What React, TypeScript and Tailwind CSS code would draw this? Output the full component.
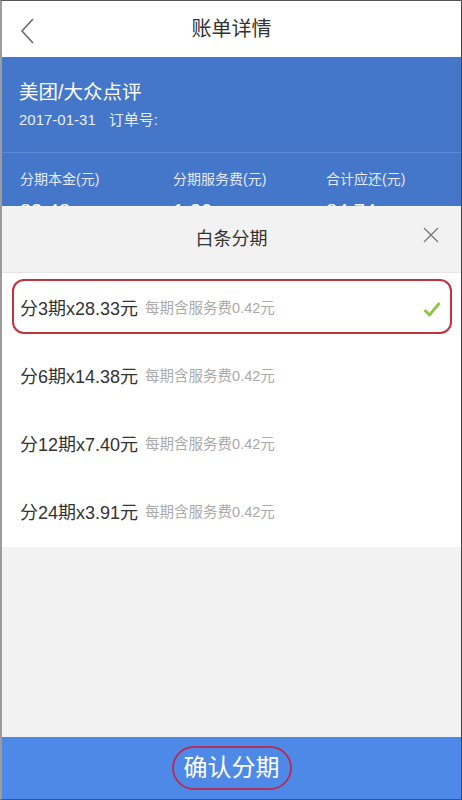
import { X } from 'lucide-react';

const FONT = { fontFamily: '"Liberation Sans", "Noto Sans CJK SC", sans-serif' };

const plans = [
  { label: '分3期x28.33元', fee: '每期含服务费0.42元', selected: true },
  { label: '分6期x14.38元', fee: '每期含服务费0.42元', selected: false },
  { label: '分12期x7.40元', fee: '每期含服务费0.42元', selected: false },
  { label: '分24期x3.91元', fee: '每期含服务费0.42元', selected: false },
];

const totals = [
  ['分期本金(元)', '83.48'],
  ['分期服务费(元)', '1.26'],
  ['合计应还(元)', '84.74'],
];

export default function App() {
  return (
    <div
      style={FONT}
      className="flex h-[800px] w-[462px] flex-col overflow-hidden border-y border-r border-l-2 border-y-[#555] border-r-[#444] border-l-[#9c9c9c] bg-[#f2f2f2]"
    >
      {/* nav bar */}
      <header className="relative flex h-[56px] shrink-0 items-center justify-center bg-white">
        <svg className="absolute left-[16px] top-[16px]" width="20" height="28" viewBox="0 0 20 28">
          <path d="M15 2 L4 14 L15 26" fill="none" stroke="#6b6b6b" strokeWidth="1.6" />
        </svg>
        <h1 className="text-[20px] text-[#333]">账单详情</h1>
      </header>

      {/* bill summary, mostly covered by the sheet */}
      <section className="h-[149px] shrink-0 overflow-hidden bg-[#4477c9] text-white">
        <div className="h-[96px] border-b border-[#5d8ad2] px-[17px] pt-[22px]">
          <div className="text-[19.5px] leading-[26px]">美团/大众点评</div>
          <div className="mt-[5px] flex gap-[13px] text-[15px] leading-[20px] text-[#e8eefa]">
            <span>2017-01-31</span>
            <span>订单号:</span>
          </div>
        </div>
        <div className="grid grid-cols-3">
          {totals.map(([label, value]) => (
            <div key={label} className="pl-[18px] pt-[16px]">
              <div className="text-[14px] leading-[20px] text-[#e3eaf8]">{label}</div>
              <div className="mt-[10px] text-[20px] leading-[24px]">{value}</div>
            </div>
          ))}
        </div>
      </section>

      {/* installment sheet */}
      <div className="relative flex h-[66px] shrink-0 items-center justify-center bg-[#f2f2f2]">
        <span className="text-[18px] text-[#333]">白条分期</span>
        <X className="absolute right-[17px] top-[16px] h-[26px] w-[26px] text-[#777]" strokeWidth={1.2} />
      </div>

      <ul className="shrink-0 border-t border-[#e6e6e6] bg-white pt-[2px]">
        {plans.map((p) => (
          <li key={p.label} className="relative flex h-[68px] items-center pl-[18px] pr-[20px]">
            <span className="text-[18px] text-[#333]">{p.label}</span>
            <span className="ml-[7px] text-[14.5px] text-[#aaa]">{p.fee}</span>
            {p.selected && (
              <>
                <svg className="ml-auto" width="18" height="17" viewBox="0 0 18 17">
                  <path d="M1.5 9 L6.5 14 L16.5 2" fill="none" stroke="#8dc63f" strokeWidth="2.8" />
                </svg>
                <div className="pointer-events-none absolute left-[10px] right-[9px] top-[4px] h-[55px] rounded-[12px] border-2 border-[#c4323f]" />
              </>
            )}
          </li>
        ))}
      </ul>

      <div className="flex-1" />

      <button className="relative flex h-[62px] shrink-0 items-center justify-center bg-[#4f89e8]">
        <span className="rounded-[22px] border-2 border-[#b3305c] px-[10px] py-[3px] text-[24px] leading-[34px] text-white">
          确认分期
        </span>
      </button>
    </div>
  );
}
